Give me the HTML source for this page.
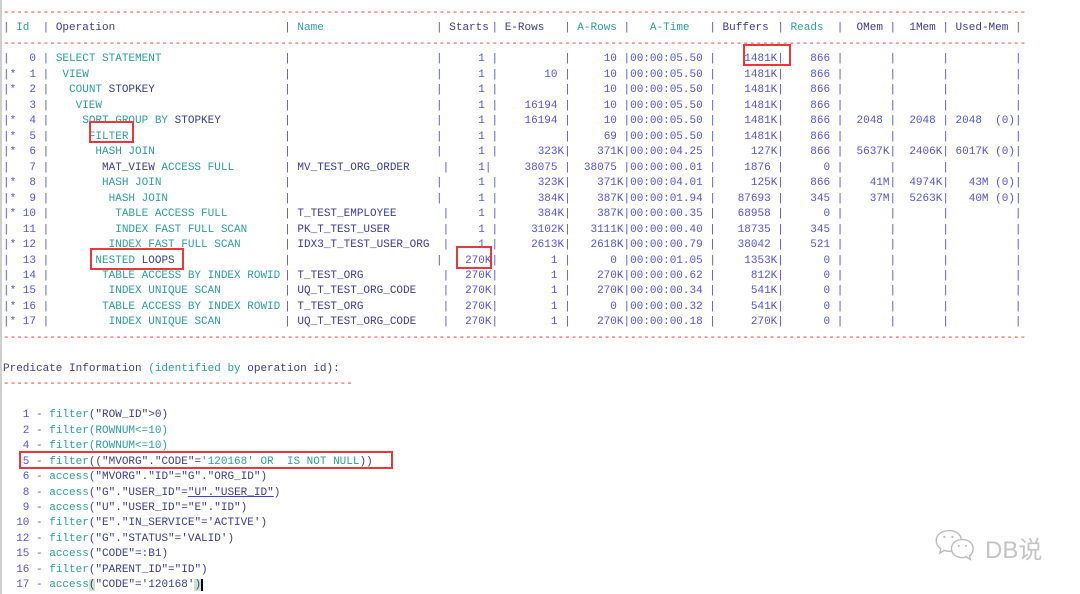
<!DOCTYPE html>
<html><head><meta charset="utf-8">
<style>
html,body{margin:0;padding:0;background:#fff;width:1080px;height:594px;overflow:hidden;position:relative}
pre{position:absolute;left:3px;top:6px;margin:0;font:11px/15.47px "Liberation Mono",monospace;color:#5454d4;white-space:pre}
.x{display:inline-block;white-space:pre;box-sizing:border-box;vertical-align:top}
.o{width:35.6ch}.m{width:22ch}.m2{width:23ch}
.s{width:7.4ch;text-align:right}.s7{width:6.4ch;text-align:right}.s6{width:5.4ch;text-align:right}
.e{width:10ch;text-align:right}.e2{width:11ch;text-align:right}
.a{width:8ch;text-align:right}.b{width:9.3ch;text-align:right}.d{width:8ch;text-align:right}
.k{width:7ch;text-align:right}.u{width:10ch;text-align:right}
.h{text-align:left}
.t{color:#2f9d9d}.p{color:#3c3c8e}.r{color:#ff2a2a}
.box{position:absolute;border:2px solid #e8383d;box-sizing:border-box}
.gl{position:absolute;left:0;top:0;width:2px;height:594px;background:#cfcfcf}
.hl{background:#cfe3cf}
.ul{text-decoration:underline;text-decoration-color:#4040d0}
</style></head><body>
<div class="gl"></div>
<pre><span class="r">-----------------------------------------------------------------------------------------------------------------------------------------------------------</span>
|<span class="x t" style="width:5ch"> Id  </span>|<span class="x o p"> Operation</span>|<span class="x m t"> Name</span>|<span class="x s h p"> Starts </span>|<span class="x e h p"> E-Rows</span>|<span class="x a h t"> A-Rows </span>|<span class="t">   A-Time   </span>|<span class="x b h p"> Buffers </span>|<span class="x d h t"> Reads  </span>|<span class="x k h p">  OMem </span>|<span class="x k h p">  1Mem </span>|<span class="x u h p"> Used-Mem </span>|
<span class="r">-----------------------------------------------------------------------------------------------------------------------------------------------------------</span>
|   0 |<span class="x o t" style="padding-left:1ch">SELECT STATEMENT</span>|<span class="x m"></span>|<span class="x s">1 </span>|<span class="x e"></span>|<span class="x a">10 </span>|00:00:05.50 |<span class="x b">1481K</span>|<span class="x d">866 </span>|<span class="x k"></span>|<span class="x k"></span>|<span class="x u"></span>|
|*  1 |<span class="x o t" style="padding-left:2ch">VIEW</span>|<span class="x m"></span>|<span class="x s">1 </span>|<span class="x e">10 </span>|<span class="x a">10 </span>|00:00:05.50 |<span class="x b">1481K</span>|<span class="x d">866 </span>|<span class="x k"></span>|<span class="x k"></span>|<span class="x u"></span>|
|*  2 |<span class="x o t" style="padding-left:3ch">COUNT <span class="p">STOPKEY</span></span>|<span class="x m"></span>|<span class="x s">1 </span>|<span class="x e"></span>|<span class="x a">10 </span>|00:00:05.50 |<span class="x b">1481K</span>|<span class="x d">866 </span>|<span class="x k"></span>|<span class="x k"></span>|<span class="x u"></span>|
|   3 |<span class="x o t" style="padding-left:4ch">VIEW</span>|<span class="x m"></span>|<span class="x s">1 </span>|<span class="x e">16194 </span>|<span class="x a">10 </span>|00:00:05.50 |<span class="x b">1481K</span>|<span class="x d">866 </span>|<span class="x k"></span>|<span class="x k"></span>|<span class="x u"></span>|
|*  4 |<span class="x o t" style="padding-left:5ch">SORT GROUP BY <span class="p">STOPKEY</span></span>|<span class="x m"></span>|<span class="x s">1 </span>|<span class="x e">16194 </span>|<span class="x a">10 </span>|00:00:05.50 |<span class="x b">1481K</span>|<span class="x d">866 </span>|<span class="x k">2048 </span>|<span class="x k">2048 </span>|<span class="x u">2048  (0)</span>|
|*  5 |<span class="x o t" style="padding-left:6ch">FILTER</span>|<span class="x m"></span>|<span class="x s">1 </span>|<span class="x e"></span>|<span class="x a">69 </span>|00:00:05.50 |<span class="x b">1481K</span>|<span class="x d">866 </span>|<span class="x k"></span>|<span class="x k"></span>|<span class="x u"></span>|
|*  6 |<span class="x o t" style="padding-left:7ch">HASH JOIN</span>|<span class="x m"></span>|<span class="x s">1 </span>|<span class="x e">323K</span>|<span class="x a">371K</span>|00:00:04.25 |<span class="x b">127K</span>|<span class="x d">866 </span>|<span class="x k">5637K</span>|<span class="x k">2406K</span>|<span class="x u">6017K (0)</span>|
|   7 |<span class="x o t" style="padding-left:8ch"><span class="p">MAT_VIEW</span> ACCESS FULL</span>|<span class="x m2 p"> MV_TEST_ORG_ORDER</span>|<span class="x s6">1</span>|<span class="x e2">38075 </span>|<span class="x a">38075 </span>|00:00:00.01 |<span class="x b">1876 </span>|<span class="x d">0 </span>|<span class="x k"></span>|<span class="x k"></span>|<span class="x u"></span>|
|*  8 |<span class="x o t" style="padding-left:8ch">HASH JOIN</span>|<span class="x m"></span>|<span class="x s">1 </span>|<span class="x e">323K</span>|<span class="x a">371K</span>|00:00:04.01 |<span class="x b">125K</span>|<span class="x d">866 </span>|<span class="x k">41M</span>|<span class="x k">4974K</span>|<span class="x u">43M (0)</span>|
|*  9 |<span class="x o t" style="padding-left:9ch">HASH JOIN</span>|<span class="x m"></span>|<span class="x s">1 </span>|<span class="x e">384K</span>|<span class="x a">387K</span>|00:00:01.94 |<span class="x b">87693 </span>|<span class="x d">345 </span>|<span class="x k">37M</span>|<span class="x k">5263K</span>|<span class="x u">40M (0)</span>|
|* 10 |<span class="x o t" style="padding-left:10ch">TABLE ACCESS FULL</span>|<span class="x m2 p"> T_TEST_EMPLOYEE</span>|<span class="x s7">1 </span>|<span class="x e">384K</span>|<span class="x a">387K</span>|00:00:00.35 |<span class="x b">68958 </span>|<span class="x d">0 </span>|<span class="x k"></span>|<span class="x k"></span>|<span class="x u"></span>|
|  11 |<span class="x o t" style="padding-left:10ch">INDEX FAST FULL SCAN</span>|<span class="x m2 p"> PK_T_TEST_USER</span>|<span class="x s7">1 </span>|<span class="x e">3102K</span>|<span class="x a">3111K</span>|00:00:00.40 |<span class="x b">18735 </span>|<span class="x d">345 </span>|<span class="x k"></span>|<span class="x k"></span>|<span class="x u"></span>|
|* 12 |<span class="x o t" style="padding-left:9ch">INDEX FAST FULL SCAN</span>|<span class="x m2 p"> IDX3_T_TEST_USER_ORG</span>|<span class="x s7">1 </span>|<span class="x e">2613K</span>|<span class="x a">2618K</span>|00:00:00.79 |<span class="x b">38042 </span>|<span class="x d">521 </span>|<span class="x k"></span>|<span class="x k"></span>|<span class="x u"></span>|
|  13 |<span class="x o t" style="padding-left:7ch">NESTED <span class="p">LOOPS</span></span>|<span class="x m"></span>|<span class="x s">270K</span>|<span class="x e">1 </span>|<span class="x a">0 </span>|00:00:01.05 |<span class="x b">1353K</span>|<span class="x d">0 </span>|<span class="x k"></span>|<span class="x k"></span>|<span class="x u"></span>|
|  14 |<span class="x o t" style="padding-left:8ch">TABLE ACCESS BY INDEX ROWID</span>|<span class="x m2 p"> T_TEST_ORG</span>|<span class="x s7">270K</span>|<span class="x e">1 </span>|<span class="x a">270K</span>|00:00:00.62 |<span class="x b">812K</span>|<span class="x d">0 </span>|<span class="x k"></span>|<span class="x k"></span>|<span class="x u"></span>|
|* 15 |<span class="x o t" style="padding-left:9ch">INDEX UNIQUE SCAN</span>|<span class="x m2 p"> UQ_T_TEST_ORG_CODE</span>|<span class="x s7">270K</span>|<span class="x e">1 </span>|<span class="x a">270K</span>|00:00:00.34 |<span class="x b">541K</span>|<span class="x d">0 </span>|<span class="x k"></span>|<span class="x k"></span>|<span class="x u"></span>|
|* 16 |<span class="x o t" style="padding-left:8ch">TABLE ACCESS BY INDEX ROWID</span>|<span class="x m2 p"> T_TEST_ORG</span>|<span class="x s7">270K</span>|<span class="x e">1 </span>|<span class="x a">0 </span>|00:00:00.32 |<span class="x b">541K</span>|<span class="x d">0 </span>|<span class="x k"></span>|<span class="x k"></span>|<span class="x u"></span>|
|* 17 |<span class="x o t" style="padding-left:9ch">INDEX UNIQUE SCAN</span>|<span class="x m2 p"> UQ_T_TEST_ORG_CODE</span>|<span class="x s7">270K</span>|<span class="x e">1 </span>|<span class="x a">270K</span>|00:00:00.18 |<span class="x b">270K</span>|<span class="x d">0 </span>|<span class="x k"></span>|<span class="x k"></span>|<span class="x u"></span>|
<span class="r">-----------------------------------------------------------------------------------------------------------------------------------------------------------</span>

<span class="p">Predicate Information <span class="t">(identified by</span> operation id):</span>
<span class="r">-----------------------------------------------------</span>

   1 - <span class="t">filter</span><span class="p">("ROW_ID"&gt;0)</span>
   2 - <span class="t">filter(ROWNUM&lt;=10)</span>
   4 - <span class="t">filter(ROWNUM&lt;=10)</span>
   5 - <span class="t">filter</span><span class="p">(("MVORG"."CODE"=<span class="t">'120168' OR  IS NOT NULL</span>))</span>
   6 - <span class="t">access</span><span class="p">("MVORG"."ID"="G"."ORG_ID")</span>
   8 - <span class="t">access</span><span class="p">("G"."USER_ID"=<span class="ul">"U"."USER_ID"</span>)</span>
   9 - <span class="t">access</span><span class="p">("U"."USER_ID"="E"."ID")</span>
  10 - <span class="t">filter</span><span class="p">("E"."IN_SERVICE"='ACTIVE')</span>
  12 - <span class="t">filter</span><span class="p">("G"."STATUS"='VALID')</span>
  15 - <span class="t">access</span><span class="p">("CODE"=:B1)</span>
  16 - <span class="t">filter</span><span class="p">("PARENT_ID"="ID")</span>
  17 - <span class="t">access</span><span class="p"><span class="hl">(</span>"CODE"='120168'<span class="hl">)</span></span><span style="border-left:2px solid #000"> </span></pre>

<div class="box" style="left:743px;top:44px;width:48px;height:22px"></div>
<div class="box" style="left:89px;top:121px;width:45px;height:22px"></div>
<div class="box" style="left:90px;top:248px;width:94px;height:22px"></div>
<div class="box" style="left:456px;top:246px;width:36px;height:23px"></div>
<div class="box" style="left:19px;top:451px;width:374px;height:18px"></div>

<svg style="position:absolute;left:933px;top:527px" width="46" height="36" viewBox="0 0 50 40">
<g fill="#fff" stroke="#bbb" stroke-width="1.5">
<path d="M17 4c-8 0-14 5-14 11 0 4 2 7 5 9l-1 5 5-3c2 1 3 1 5 1 8 0 14-5 14-12S25 4 17 4z"/>
<path d="M32 14c-7 0-12 4-12 10s5 10 12 10c1 0 3 0 4-1l5 3-1-4c3-2 4-5 4-8 0-6-5-10-12-10z"/>
</g>
<g fill="#bbb"><circle cx="12" cy="11" r="1.3"/><circle cx="21" cy="11" r="1.3"/><circle cx="28" cy="21" r="1.2"/><circle cx="36" cy="21" r="1.2"/></g>
</svg>
<div style="position:absolute;left:985px;top:530px;font:24px 'Liberation Sans','Noto Sans CJK SC',sans-serif;color:#c4c4c4">DB说</div>
</body></html>
